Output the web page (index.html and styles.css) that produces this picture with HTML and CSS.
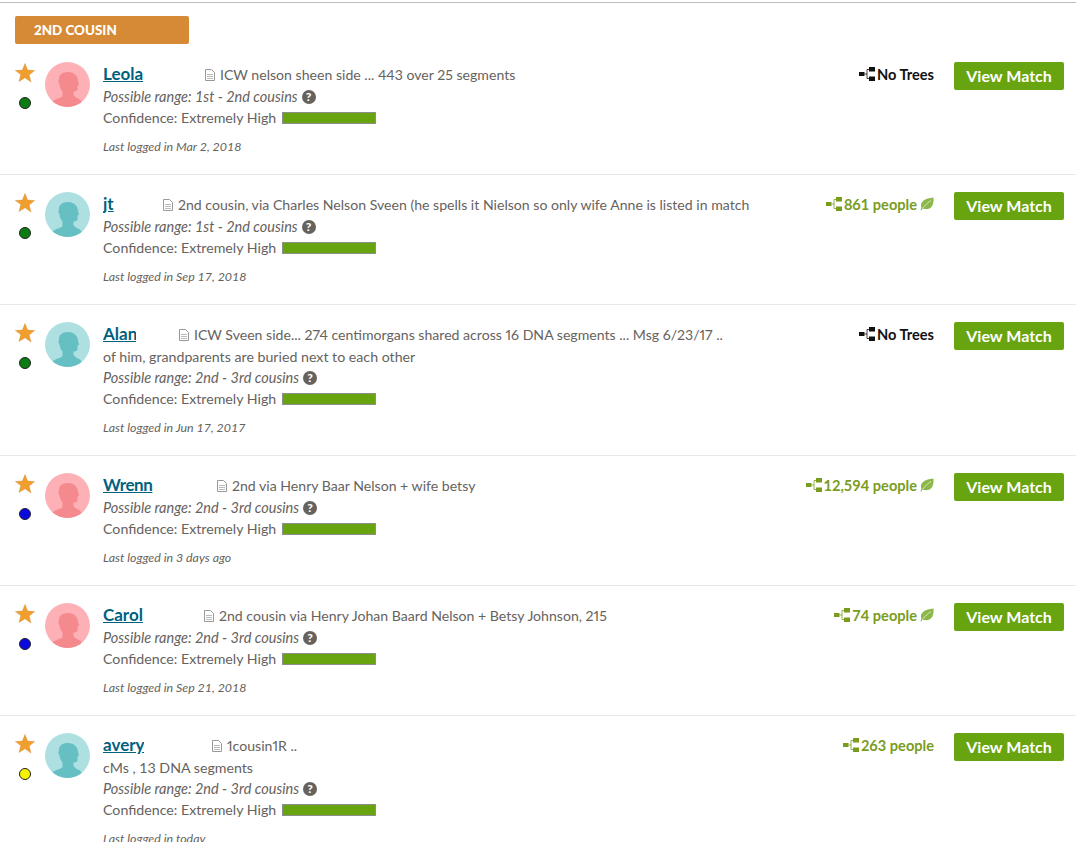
FILE: index.html
```html
<!DOCTYPE html>
<html lang="en">
<head>
<meta charset="utf-8">
<title>DNA Matches</title>
<link rel="stylesheet" href="styles.css">
</head>
<body>
<svg class="defs" width="0" height="0" aria-hidden="true">
  <symbol id="star" viewBox="0 0 20 20"><path d="M10 .5l2.6 6.6 7 .5-5.4 4.5 1.800 6.900L10 14.700l-6 3.800 1.800-6.900L.4 7.600l7-.5z"/></symbol>
  <symbol id="person" viewBox="0 0 45 45"><path d="M4 45C5 40 9 38 13 36.500C16 35.500 17.500 35 17.500 33V29.500C16 28 14.500 25 14.500 22C13 21 13 19 14 18C13.500 13 17 10 23 10C29 10 33 14 33 19L34 22.500L32.500 23.500V27C32.500 29 30 29.500 28.500 29.500V33C29.500 35 32 36 35 37.500L40 45z"/></symbol>
  <symbol id="doc" viewBox="0 0 10 12"><path fill="none" stroke="#999" d="M.5.500h6l3 3v8h-9z"/><path fill="none" stroke="#bbb" d="M2 5.500h6M2 7.500h6M2 9.500h6"/></symbol>
  <symbol id="tree" viewBox="0 0 16 14"><path fill="currentColor" d="M0 5h5.500v4H0zM10 0h6v4.500h-6zM10 9.500h6V14h-6z"/><path fill="none" stroke="currentColor" stroke-width=".8" d="M5.500 7h2.500M10 2.500H8v9h2"/></symbol>
  <symbol id="leaf" viewBox="0 0 14 14"><path d="M1.500 11C-.5 6 3 1.500 13.500.5c.5 8-2.500 12.500-9 11.500-1 0-1.800-.3-2-.5-.4.6-.8 1.200-1 2l-1-.2c.2-1 .6-1.800 1-2.500z"/><path class="vein" d="M2.500 11.500C5 8 8 5.500 11 3.500"/></symbol>
</svg>
<main class="page">
  <div class="badge">2ND COUSIN</div>

  <article class="row">
    <div class="marks"><svg class="star"><use href="#star"/></svg><span class="dot dot-green"></span></div>
    <div class="avatar avatar-f"><svg><use href="#person"/></svg></div>
    <div class="info">
      <div class="line first"><a class="name n-leola" href="#">Leola</a><svg class="doc"><use href="#doc"/></svg><span class="note">ICW nelson sheen side ... 443 over 25 segments</span></div>
      <div class="line range">Possible range: 1st - 2nd cousins<span class="help">?</span></div>
      <div class="line">Confidence: Extremely High<span class="bar"></span></div>
      <div class="logged">Last logged in Mar 2, 2018</div>
    </div>
    <div class="trees none"><svg class="tree"><use href="#tree"/></svg>No Trees</div>
    <a class="btn" href="#">View Match</a>
  </article>

  <article class="row">
    <div class="marks"><svg class="star"><use href="#star"/></svg><span class="dot dot-green"></span></div>
    <div class="avatar avatar-m"><svg><use href="#person"/></svg></div>
    <div class="info">
      <div class="line first"><a class="name n-jt" href="#">jt</a><svg class="doc"><use href="#doc"/></svg><span class="note">2nd cousin, via Charles Nelson Sveen (he spells it Nielson so only wife Anne is listed in match</span></div>
      <div class="line range">Possible range: 1st - 2nd cousins<span class="help">?</span></div>
      <div class="line">Confidence: Extremely High<span class="bar"></span></div>
      <div class="logged">Last logged in Sep 17, 2018</div>
    </div>
    <div class="trees"><svg class="tree"><use href="#tree"/></svg>861 people<svg class="leaf"><use href="#leaf"/></svg></div>
    <a class="btn" href="#">View Match</a>
  </article>

  <article class="row">
    <div class="marks"><svg class="star"><use href="#star"/></svg><span class="dot dot-green"></span></div>
    <div class="avatar avatar-m"><svg><use href="#person"/></svg></div>
    <div class="info">
      <div class="line first"><a class="name n-alan" href="#">Alan</a><svg class="doc"><use href="#doc"/></svg><span class="note">ICW Sveen side... 274 centimorgans shared across 16 DNA segments ... Msg 6/23/17 ..</span></div>
      <div class="line">of him, grandparents are buried next to each other</div>
      <div class="line range">Possible range: 2nd - 3rd cousins<span class="help">?</span></div>
      <div class="line">Confidence: Extremely High<span class="bar"></span></div>
      <div class="logged">Last logged in Jun 17, 2017</div>
    </div>
    <div class="trees none"><svg class="tree"><use href="#tree"/></svg>No Trees</div>
    <a class="btn" href="#">View Match</a>
  </article>

  <article class="row">
    <div class="marks"><svg class="star"><use href="#star"/></svg><span class="dot dot-blue"></span></div>
    <div class="avatar avatar-f"><svg><use href="#person"/></svg></div>
    <div class="info">
      <div class="line first"><a class="name n-wrenn" href="#">Wrenn</a><svg class="doc"><use href="#doc"/></svg><span class="note">2nd via Henry Baar Nelson + wife betsy</span></div>
      <div class="line range">Possible range: 2nd - 3rd cousins<span class="help">?</span></div>
      <div class="line">Confidence: Extremely High<span class="bar"></span></div>
      <div class="logged">Last logged in 3 days ago</div>
    </div>
    <div class="trees"><svg class="tree"><use href="#tree"/></svg>12,594 people<svg class="leaf"><use href="#leaf"/></svg></div>
    <a class="btn" href="#">View Match</a>
  </article>

  <article class="row">
    <div class="marks"><svg class="star"><use href="#star"/></svg><span class="dot dot-blue"></span></div>
    <div class="avatar avatar-f"><svg><use href="#person"/></svg></div>
    <div class="info">
      <div class="line first"><a class="name n-carol" href="#">Carol</a><svg class="doc"><use href="#doc"/></svg><span class="note">2nd cousin via Henry Johan Baard Nelson + Betsy Johnson, 215</span></div>
      <div class="line range">Possible range: 2nd - 3rd cousins<span class="help">?</span></div>
      <div class="line">Confidence: Extremely High<span class="bar"></span></div>
      <div class="logged">Last logged in Sep 21, 2018</div>
    </div>
    <div class="trees"><svg class="tree"><use href="#tree"/></svg>74 people<svg class="leaf"><use href="#leaf"/></svg></div>
    <a class="btn" href="#">View Match</a>
  </article>

  <article class="row">
    <div class="marks"><svg class="star"><use href="#star"/></svg><span class="dot dot-yellow"></span></div>
    <div class="avatar avatar-m"><svg><use href="#person"/></svg></div>
    <div class="info">
      <div class="line first"><a class="name n-avery" href="#">avery</a><svg class="doc"><use href="#doc"/></svg><span class="note">1cousin1R ..</span></div>
      <div class="line">cMs , 13 DNA segments</div>
      <div class="line range">Possible range: 2nd - 3rd cousins<span class="help">?</span></div>
      <div class="line">Confidence: Extremely High<span class="bar"></span></div>
      <div class="logged">Last logged in today</div>
    </div>
    <div class="trees"><svg class="tree"><use href="#tree"/></svg>263 people</div>
    <a class="btn" href="#">View Match</a>
  </article>
</main>
</body>
</html>
```
FILE: styles.css
```css
* { box-sizing: border-box; }
html, body { height: 842px; overflow: hidden; }
body {
  margin: 0;
  background: #fff;
  color: #66625e;
  font-family: "Lato", "Open Sans", sans-serif;
  font-size: 14.2px;
}
.defs { position: absolute; }
.page {
  margin-top: 2px;
  border-top: 1px solid #bdbdbd;
  padding-top: 13px;
}
.badge {
  width: 174px;
  height: 28px;
  margin: 0 0 1px 15px;
  padding-left: 19px;
  background: #d68a35;
  border-radius: 2px;
  color: #fff;
  font-size: 13.4px;
  font-weight: 900;
  line-height: 28px;
}
.row {
  display: flex;
  align-items: flex-start;
  padding: 17px 12px 17px 15px;
  border-bottom: 1px solid #e8e8e8;
}
.marks {
  display: flex;
  flex-direction: column;
  align-items: center;
  width: 20px;
  padding-top: 1px;
}
.star { width: 20px; height: 20px; fill: #f19f2c; stroke: #c98a3a; stroke-width: .4px; }
.dot {
  width: 12px;
  height: 12px;
  margin: 14px 1px 0 0;
  border: 1px solid #222;
  border-radius: 50%;
}
.dot-green { background: #0a7c12; }
.dot-blue { background: #0a0ae0; }
.dot-yellow { background: #f6f200; }
.avatar {
  flex: none;
  width: 45px;
  height: 45px;
  margin: 0 13px 0 10px;
  border-radius: 50%;
  overflow: hidden;
}
.avatar svg { display: block; width: 45px; height: 45px; }
.avatar-f { background: #fdb0b6; fill: #f48a8d; }
.avatar-m { background: #aee0e1; fill: #65bfc3; }
.info { flex: 1; min-width: 0; }
.line {
  display: flex;
  align-items: center;
  height: 21px;
  white-space: nowrap;
  line-height: 21px;
}
.line.first { height: 24px; }
.note { font-size: 14.1px; font-variant-numeric: proportional-nums; }
.range { font-size: 14.5px; font-style: italic; }
.name {
  display: block;
  flex: none;
  overflow: hidden;
  color: #00617f;
  font-size: 17px;
  font-weight: 700;
  line-height: 22px;
  text-decoration: underline;
}
.n-leola { width: 42px; margin-right: 60px; }
.n-jt { width: 11px; margin-right: 49px; }
.n-alan { width: 33px; margin-right: 43px; }
.n-wrenn { width: 50px; margin-right: 64px; letter-spacing: -.4px; }
.n-carol { width: 41px; margin-right: 60px; }
.n-avery { width: 41px; margin-right: 68px; }
.doc { flex: none; width: 10px; height: 12px; margin: 1px 5px 0 0; }
.help {
  display: inline-block;
  width: 14px;
  height: 14px;
  margin-left: 4px;
  background: #66625e;
  border-radius: 50%;
  color: #fff;
  font-size: 12px;
  font-style: normal;
  font-weight: 900;
  line-height: 14px;
  text-align: center;
}
.bar {
  width: 94px;
  height: 12px;
  margin: 1px 0 0 6px;
  background: #68a40f;
  border: 1px solid #8e8e8e;
}
.logged { margin-top: 9px; font-size: 12.4px; font-style: italic; line-height: 20px; }
.trees {
  display: flex;
  align-items: center;
  flex: none;
  height: 24px;
  margin: 0 20px 0 0;
  color: #7a9c1e;
  font-size: 14.6px;
  font-weight: 700;
}
.trees.none { color: #111; }
.tree { width: 16px; height: 14px; margin-right: 2px; color: #7a9c1e; }
.none .tree { color: #111; }
.leaf { width: 14px; height: 14px; margin-left: 3px; fill: #8cb84a; }
.vein { fill: none; stroke: #fff; stroke-width: .6px; }
.btn {
  flex: none;
  width: 110px;
  height: 28px;
  background: #68a40f;
  border-radius: 2px;
  color: #fff;
  font-size: 16px;
  font-weight: 700;
  line-height: 28px;
  text-align: center;
  text-decoration: none;
}
```
